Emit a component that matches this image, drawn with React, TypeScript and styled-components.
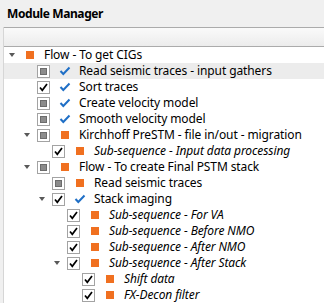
import * as React from 'react'
import styled, { createGlobalStyle } from 'styled-components'

type Check = 'none' | 'partial' | 'checked'
type Mark = 'orange' | 'blue'

interface Item {
  level: number
  label: string
  expanded?: boolean
  check: Check
  mark: Mark
  italic?: boolean
  selected?: boolean
}

const items: Item[] = [
  { level: 0, label: 'Flow - To get CIGs', expanded: true, check: 'none', mark: 'orange' },
  { level: 1, label: 'Read seismic traces - input gathers', check: 'partial', mark: 'blue', selected: true },
  { level: 1, label: 'Sort traces', check: 'checked', mark: 'blue' },
  { level: 1, label: 'Create velocity model', check: 'partial', mark: 'blue' },
  { level: 1, label: 'Smooth velocity model', check: 'partial', mark: 'blue' },
  { level: 1, label: 'Kirchhoff PreSTM - file in/out - migration', expanded: true, check: 'partial', mark: 'orange' },
  { level: 2, label: 'Sub-sequence - Input data processing', check: 'checked', mark: 'orange', italic: true },
  { level: 1, label: 'Flow - To create Final PSTM stack', expanded: true, check: 'partial', mark: 'orange' },
  { level: 2, label: 'Read seismic traces', check: 'partial', mark: 'orange' },
  { level: 2, label: 'Stack imaging', expanded: true, check: 'checked', mark: 'blue' },
  { level: 3, label: 'Sub-sequence - For VA', check: 'checked', mark: 'orange', italic: true },
  { level: 3, label: 'Sub-sequence - Before NMO', check: 'checked', mark: 'orange', italic: true },
  { level: 3, label: 'Sub-sequence - After NMO', check: 'checked', mark: 'orange', italic: true },
  { level: 3, label: 'Sub-sequence - After Stack', expanded: true, check: 'checked', mark: 'orange', italic: true },
  { level: 4, label: 'Shift data', check: 'checked', mark: 'orange', italic: true },
  { level: 4, label: 'FX-Decon filter', check: 'checked', mark: 'orange', italic: true },
]

const GlobalStyle = createGlobalStyle`
  body {
    margin: 0;
    background: #f0f0f0;
    font-family: 'Noto Sans', 'Open Sans', sans-serif;
    font-size: 12px;
    color: #000;
  }
`

const Panel = styled.div`
  display: flex;
  flex-direction: column;
  width: 324px;
  height: 303px;
  overflow: hidden;
  background: #f0f0f0;
`

const TitleBar = styled.div`
  display: flex;
  align-items: center;
  height: 27px;
  padding-left: 7px;
  font-weight: 700;
  font-size: 12px;
  letter-spacing: -0.4px;
`

const Tree = styled.div`
  flex: 1;
  margin-left: 3px;
  border-left: 1px solid #d6d6d6;
  background: #fff;
`

const HeaderBar = styled.div`
  height: 18px;
  border-top: 1px solid #ababab;
  border-bottom: 1px solid #ababab;
  background: linear-gradient(#fafafa, #ececec);
`

const Row = styled.div<{ $selected?: boolean }>`
  display: flex;
  align-items: center;
  height: 16px;
  white-space: nowrap;
  background: ${p => (p.$selected ? '#ececec' : 'transparent')};
`

const Branch = styled.div<{ $level: number }>`
  display: flex;
  align-items: center;
  justify-content: center;
  flex: none;
  width: 15px;
  height: 16px;
  margin-left: ${p => p.$level * 15}px;
`

const Arrow = styled.div`
  width: 0;
  height: 0;
  border-left: 3.5px solid transparent;
  border-right: 3.5px solid transparent;
  border-top: 4px solid #595959;
`

const Box = styled.div`
  position: relative;
  flex: none;
  width: 11px;
  height: 11px;
  margin: 0 4px 0 3px;
  border: 1px solid #a3a3a3;
  background: #fff;
`

const Partial = styled.div`
  position: absolute;
  left: 2px;
  top: 2px;
  width: 5px;
  height: 5px;
  border: 1px solid #6c6c6c;
  background: #8c8c8c;
`

const MarkCell = styled.div`
  display: flex;
  align-items: center;
  flex: none;
  width: 25px;
  height: 16px;
`

const Square = styled.div`
  width: 8px;
  height: 8px;
  margin-left: 7px;
  background: #f07020;
`

const Label = styled.span<{ $italic?: boolean }>`
  font-style: ${p => (p.$italic ? 'italic' : 'normal')};
  line-height: 16px;
  letter-spacing: -0.1px;
`

function CheckBox({ state }: { state: Check }) {
  return (
    <Box>
      {state === 'partial' && <Partial />}
      {state === 'checked' && (
        <svg width="11" height="11" viewBox="0 0 11 11" style={{ position: 'absolute', left: 0, top: 0 }}>
          <path d="M2 5.5 L4.3 8.3 L9 2" fill="none" stroke="#000" strokeWidth="1.7" />
        </svg>
      )}
    </Box>
  )
}

function Mark({ mark }: { mark: Mark }) {
  return (
    <MarkCell>
      {mark === 'orange' ? (
        <Square />
      ) : (
        <svg width="12" height="10" viewBox="0 0 12 10" style={{ marginLeft: 5 }}>
          <path d="M1.5 5 L4.3 8 L10.5 1.5" fill="none" stroke="#1f6fc6" strokeWidth="2" />
        </svg>
      )}
    </MarkCell>
  )
}

export default function App() {
  return (
    <Panel>
      <GlobalStyle />
      <TitleBar>Module Manager</TitleBar>
      <Tree>
        <HeaderBar />
        {items.map((it, i) => (
          <Row key={i} $selected={it.selected}>
            <Branch $level={it.level}>{it.expanded && <Arrow />}</Branch>
            {it.check !== 'none' && <CheckBox state={it.check} />}
            <Mark mark={it.mark} />
            <Label $italic={it.italic}>{it.label}</Label>
          </Row>
        ))}
      </Tree>
    </Panel>
  )
}
